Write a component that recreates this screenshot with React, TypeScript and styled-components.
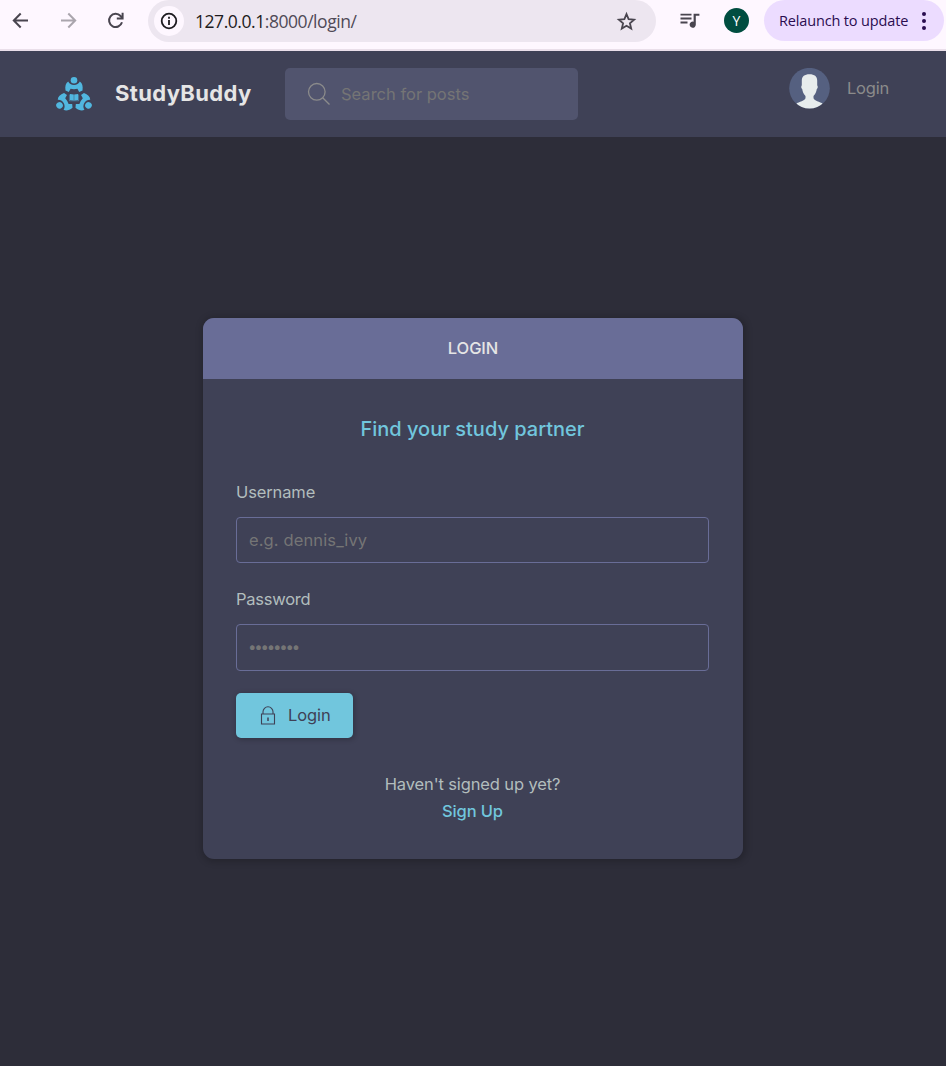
import React from "react";
import styled, { createGlobalStyle } from "styled-components";

const GlobalStyle = createGlobalStyle`
  * { box-sizing: border-box; margin: 0; padding: 0; }
  body { background: #2d2d39; font-family: Inter, "Open Sans", sans-serif; overflow: hidden; }
  svg { display: block; flex: none; }
  a { text-decoration: none; color: inherit; }
`;

const Page = styled.div`
  height: 1066px;
  display: flex;
  flex-direction: column;
`;

const BrowserBar = styled.div`
  height: 51px;
  flex: none;
  display: flex;
  align-items: flex-start;
  background: #fef7ff;
  border-bottom: 2px solid #eadfea;
  font-family: "Open Sans", "Noto Sans", sans-serif;
`;

const NavIcons = styled.div`
  width: 148px;
  height: 41px;
  padding-left: 10px;
  display: flex;
  align-items: center;
  gap: 26px;
`;

const AddressBar = styled.div`
  width: 508px;
  height: 42px;
  border-radius: 21px;
  background: #ede6f0;
  display: flex;
  align-items: center;
  padding: 0 19px 0 6px;
`;

const InfoBadge = styled.span`
  width: 30px;
  height: 30px;
  border-radius: 50%;
  background: #fef7ff;
  display: grid;
  place-items: center;
`;

const Url = styled.span`
  flex: 1;
  margin-left: 11px;
  font-size: 17.5px;
  line-height: 24px;
  letter-spacing: -0.45px;
  color: #504a57;
  b { font-weight: 400; color: #1d1b20; }
`;

const Tools = styled.div`
  height: 41px;
  flex: 1;
  display: flex;
  align-items: center;
  padding-left: 22px;
`;

const Profile = styled.span`
  width: 25px;
  height: 25px;
  margin: 0 15px 0 23px;
  border-radius: 50%;
  background: #004d40;
  color: #fff;
  font-size: 14px;
  line-height: 25px;
  text-align: center;
`;

const Relaunch = styled.span`
  width: 180px;
  height: 41px;
  border-radius: 21px;
  background: #ecdcff;
  color: #2a0c50;
  display: flex;
  align-items: center;
  justify-content: space-between;
  padding: 0 17px 0 15px;
  font-size: 14.5px;
  letter-spacing: -0.15px;
  white-space: nowrap;
`;

const Header = styled.header`
  height: 86px;
  flex: none;
  background: #3f4156;
  display: flex;
  align-items: center;
  padding: 0 57px 0 55px;
`;

const Brand = styled.a`
  width: 230px;
  display: flex;
  align-items: center;
  gap: 22px;
  color: #e5e5e5;
  font-size: 22px;
  font-weight: 700;
  line-height: 34px;
  letter-spacing: 0.35px;
`;

const BrandName = styled.span`
  padding-bottom: 2px;
`;

const Search = styled.label`
  width: 293px;
  height: 52px;
  border-radius: 5px;
  background: #51546e;
  display: flex;
  align-items: center;
  gap: 10px;
  padding-left: 22px;
`;

const SearchInput = styled.input`
  border: 0;
  outline: 0;
  background: none;
  font: 400 16.5px Inter, sans-serif;
  width: 220px;
  &::placeholder { color: #757575; }
`;

const Account = styled.a`
  margin: -12px 0 0 auto;
  display: flex;
  align-items: center;
  gap: 17px;
  color: #8b8b8b;
  font-size: 16.5px;
  font-weight: 400;
  letter-spacing: -0.2px;
`;

const Main = styled.main`
  flex: 1;
  display: flex;
  justify-content: center;
  align-items: flex-start;
  padding-top: 181px;
`;

const Card = styled.section`
  width: 540px;
  height: 541px;
  border-radius: 11px;
  overflow: hidden;
  background: #3f4156;
  box-shadow: 1px 1px 7px 2px rgba(0, 0, 0, 0.2);
`;

const CardTitle = styled.h1`
  height: 61px;
  background: #696d97;
  color: #e5e5e5;
  font-size: 16.5px;
  font-weight: 500;
  line-height: 61px;
  text-align: center;
  letter-spacing: -0.1px;
`;

const CardBody = styled.div`
  padding: 36px 34px 0 33px;
`;

const Tagline = styled.h2`
  color: #71c6dd;
  font-size: 20px;
  font-weight: 500;
  line-height: 28px;
  text-align: center;
`;

const Field = styled.label<{ $top: number; $height: number }>`
  display: block;
  margin-top: ${(p) => p.$top}px;
  color: #b2bdbd;
  font-size: 16.5px;
  line-height: 28px;
  input {
    display: block;
    width: 100%;
    height: ${(p) => p.$height}px;
    margin-top: 11px;
    padding: 0 12px;
    border: 1px solid #696d97;
    border-radius: 4px;
    outline: 0;
    background: none;
    font: 400 16.5px Inter, sans-serif;
    letter-spacing: 0.12px;
  }
  input::placeholder { color: #757575; }
`;

const LabelText = styled.span<{ $spacing: number }>`
  display: block;
  letter-spacing: ${(p) => p.$spacing}px;
`;

const PasswordInput = styled.input`
  && { padding: 0 11px 3px; font-size: 15px; }
  &&::placeholder { letter-spacing: -2.2px; }
`;

const Submit = styled.button`
  width: 117px;
  height: 45px;
  margin-top: 22px;
  border: 0;
  border-radius: 5px;
  background: #71c6dd;
  color: #3f4156;
  box-shadow: 1px 1px 5px 1px rgba(0, 0, 0, 0.2);
  display: flex;
  align-items: center;
  gap: 12px;
  padding: 0 0 1px 24px;
  font: 400 16.5px Inter, sans-serif;
  letter-spacing: -0.1px;
`;

const SignupNote = styled.div`
  margin-top: 33px;
  text-align: center;
  color: #b2bdbd;
  font-size: 16.5px;
  line-height: 27px;
  letter-spacing: -0.13px;
  a { display: block; color: #71c6dd; font-weight: 500; }
`;

const LogoMember = ({ angle }: { angle: number }) => (
  <g transform={`rotate(${angle} 19 22)`}>
    <circle cx="19" cy="5.3" r="3.3" />
    <path d="M13.2 6.6C10.6 8.2 9.9 11.4 10.5 15.4L13.8 16.9L15.6 13.8Q19 14.6 22.4 13.8L24.2 16.9L27.5 15.4C28.1 11.4 27.4 8.2 24.8 6.6Q23.2 9.9 19 10.1Q14.8 9.9 13.2 6.6Z" />
  </g>
);

const Logo = () => (
  <svg width="38" height="38" viewBox="0 0 38 38" fill="#51b7df">
    <LogoMember angle={0} />
    <LogoMember angle={120} />
    <LogoMember angle={240} />
    <path d="M13.8 18.2H24.2V26.6H13.8Z" fill="#3f4156" />
    <path d="M15 19L18.8 19.4V25.4L15 25ZM19.2 19.4L23 19V25L19.2 25.4Z" />
    <path d="M14.4 19.5V25.8H23.6V19.5" fill="none" stroke="#51b7df" strokeWidth="0.5" />
  </svg>
);

const Avatar = () => (
  <svg width="41" height="41" viewBox="0 0 41 41">
    <defs><clipPath id="round"><circle cx="20.5" cy="20.2" r="20.3" /></clipPath></defs>
    <g clipPath="url(#round)">
      <path d="M0 0H41V41H0Z" fill="#556080" />
      <path d="M7 36C10 33.4 16.2 33 16.5 30V28C14.2 25.8 13.6 23 13.2 21C12 20 12 18.2 12.8 17.2V12.5C12.8 8.4 15.5 6.2 20.5 6.2S28.2 8.4 28.2 12.5V17.2C29 18.2 29 20 27.8 21C27.4 23 26.8 25.8 24.5 28V30C24.8 33 31 33.4 34 36L30 41H11Z" fill="#e7eced" />
    </g>
  </svg>
);

export default function App() {
  return (
    <Page>
      <GlobalStyle />
      <BrowserBar>
        <NavIcons>
          <svg width="21" height="21" viewBox="0 0 21 21" fill="none" stroke="#49454f" strokeWidth="2"><path d="M18 10.5H4M10.7 3.5L3.8 10.5L10.7 17.5" /></svg>
          <svg width="21" height="21" viewBox="0 0 21 21" fill="none" stroke="#aaa5ad" strokeWidth="2"><path d="M4 10.5H18M11.3 3.5L18.2 10.5L11.3 17.5" /></svg>
          <svg width="21" height="21" viewBox="0 0 21 21" fill="none" stroke="#49454f" strokeWidth="2"><path d="M18 12.3A6.6 6.6 0 1 1 16.6 6L18.4 8" /><path d="M18.6 2.8V8.4H12.8" /></svg>
        </NavIcons>
        <AddressBar>
          <InfoBadge>
            <svg width="18" height="18" viewBox="0 0 18 18" fill="none" stroke="#1d1b20" strokeWidth="1.8"><circle cx="9" cy="9" r="7.3" /><path d="M9 8V13M9 4.8V6.7" /></svg>
          </InfoBadge>
          <Url><b>127.0.0.1</b>:8000/login/</Url>
          <svg width="21" height="21" viewBox="0 0 21 21" fill="none" stroke="#49454f" strokeWidth="1.8"><path d="M10.5 3.1L12.6 8.1L18.1 8.6L13.9 12.2L15.2 17.6L10.5 14.7L5.8 17.6L7.1 12.2L2.9 8.6L8.4 8.1Z" /></svg>
        </AddressBar>
        <Tools>
          <svg width="23" height="20" viewBox="0 0 23 20" fill="#49454f"><path d="M2.5 2.7H13.5V4.6H2.5ZM2.5 6.6H13.5V8.5H2.5ZM2.5 10.6H9.5V12.5H2.5ZM15.6 2.7H21.4V4.8H17.8V13.6A3.1 3.1 0 1 1 15.6 10.7Z" /></svg>
          <Profile>Y</Profile>
          <Relaunch>
            Relaunch to update
            <svg width="6" height="20" viewBox="0 0 6 20" fill="#2a0c50"><circle cx="3" cy="3" r="2" /><circle cx="3" cy="10" r="2" /><circle cx="3" cy="17" r="2" /></svg>
          </Relaunch>
        </Tools>
      </BrowserBar>
      <Header>
        <Brand href="#"><Logo /><BrandName>StudyBuddy</BrandName></Brand>
        <Search>
          <svg width="24" height="24" viewBox="0 0 24 24" fill="none" stroke="#8b8b8b" strokeWidth="1.3"><circle cx="9.8" cy="9.8" r="8.3" /><path d="M15.7 15.7L22.5 22.5" /></svg>
          <SearchInput placeholder="Search for posts" />
        </Search>
        <Account href="#"><Avatar />Login</Account>
      </Header>
      <Main>
        <Card>
          <CardTitle>LOGIN</CardTitle>
          <CardBody>
            <Tagline>Find your study partner</Tagline>
            <Field $top={35} $height={46}><LabelText $spacing={-0.12}>Username</LabelText><input placeholder="e.g. dennis_ivy" /></Field>
            <Field $top={22} $height={47}><LabelText $spacing={-0.25}>Password</LabelText><PasswordInput type="password" placeholder="••••••••" /></Field>
            <Submit>
              <svg width="16" height="19" viewBox="0 0 16 19" fill="none" stroke="#3f4156" strokeWidth="1.1"><path d="M1.5 8H14.5V18H1.5ZM3 8V5.8A5 5 0 0 1 13 5.8V8" /><path d="M8 11.5V15" strokeWidth="1.5" /></svg>
              Login
            </Submit>
            <SignupNote>Haven't signed up yet?<a href="#">Sign Up</a></SignupNote>
          </CardBody>
        </Card>
      </Main>
    </Page>
  );
}
